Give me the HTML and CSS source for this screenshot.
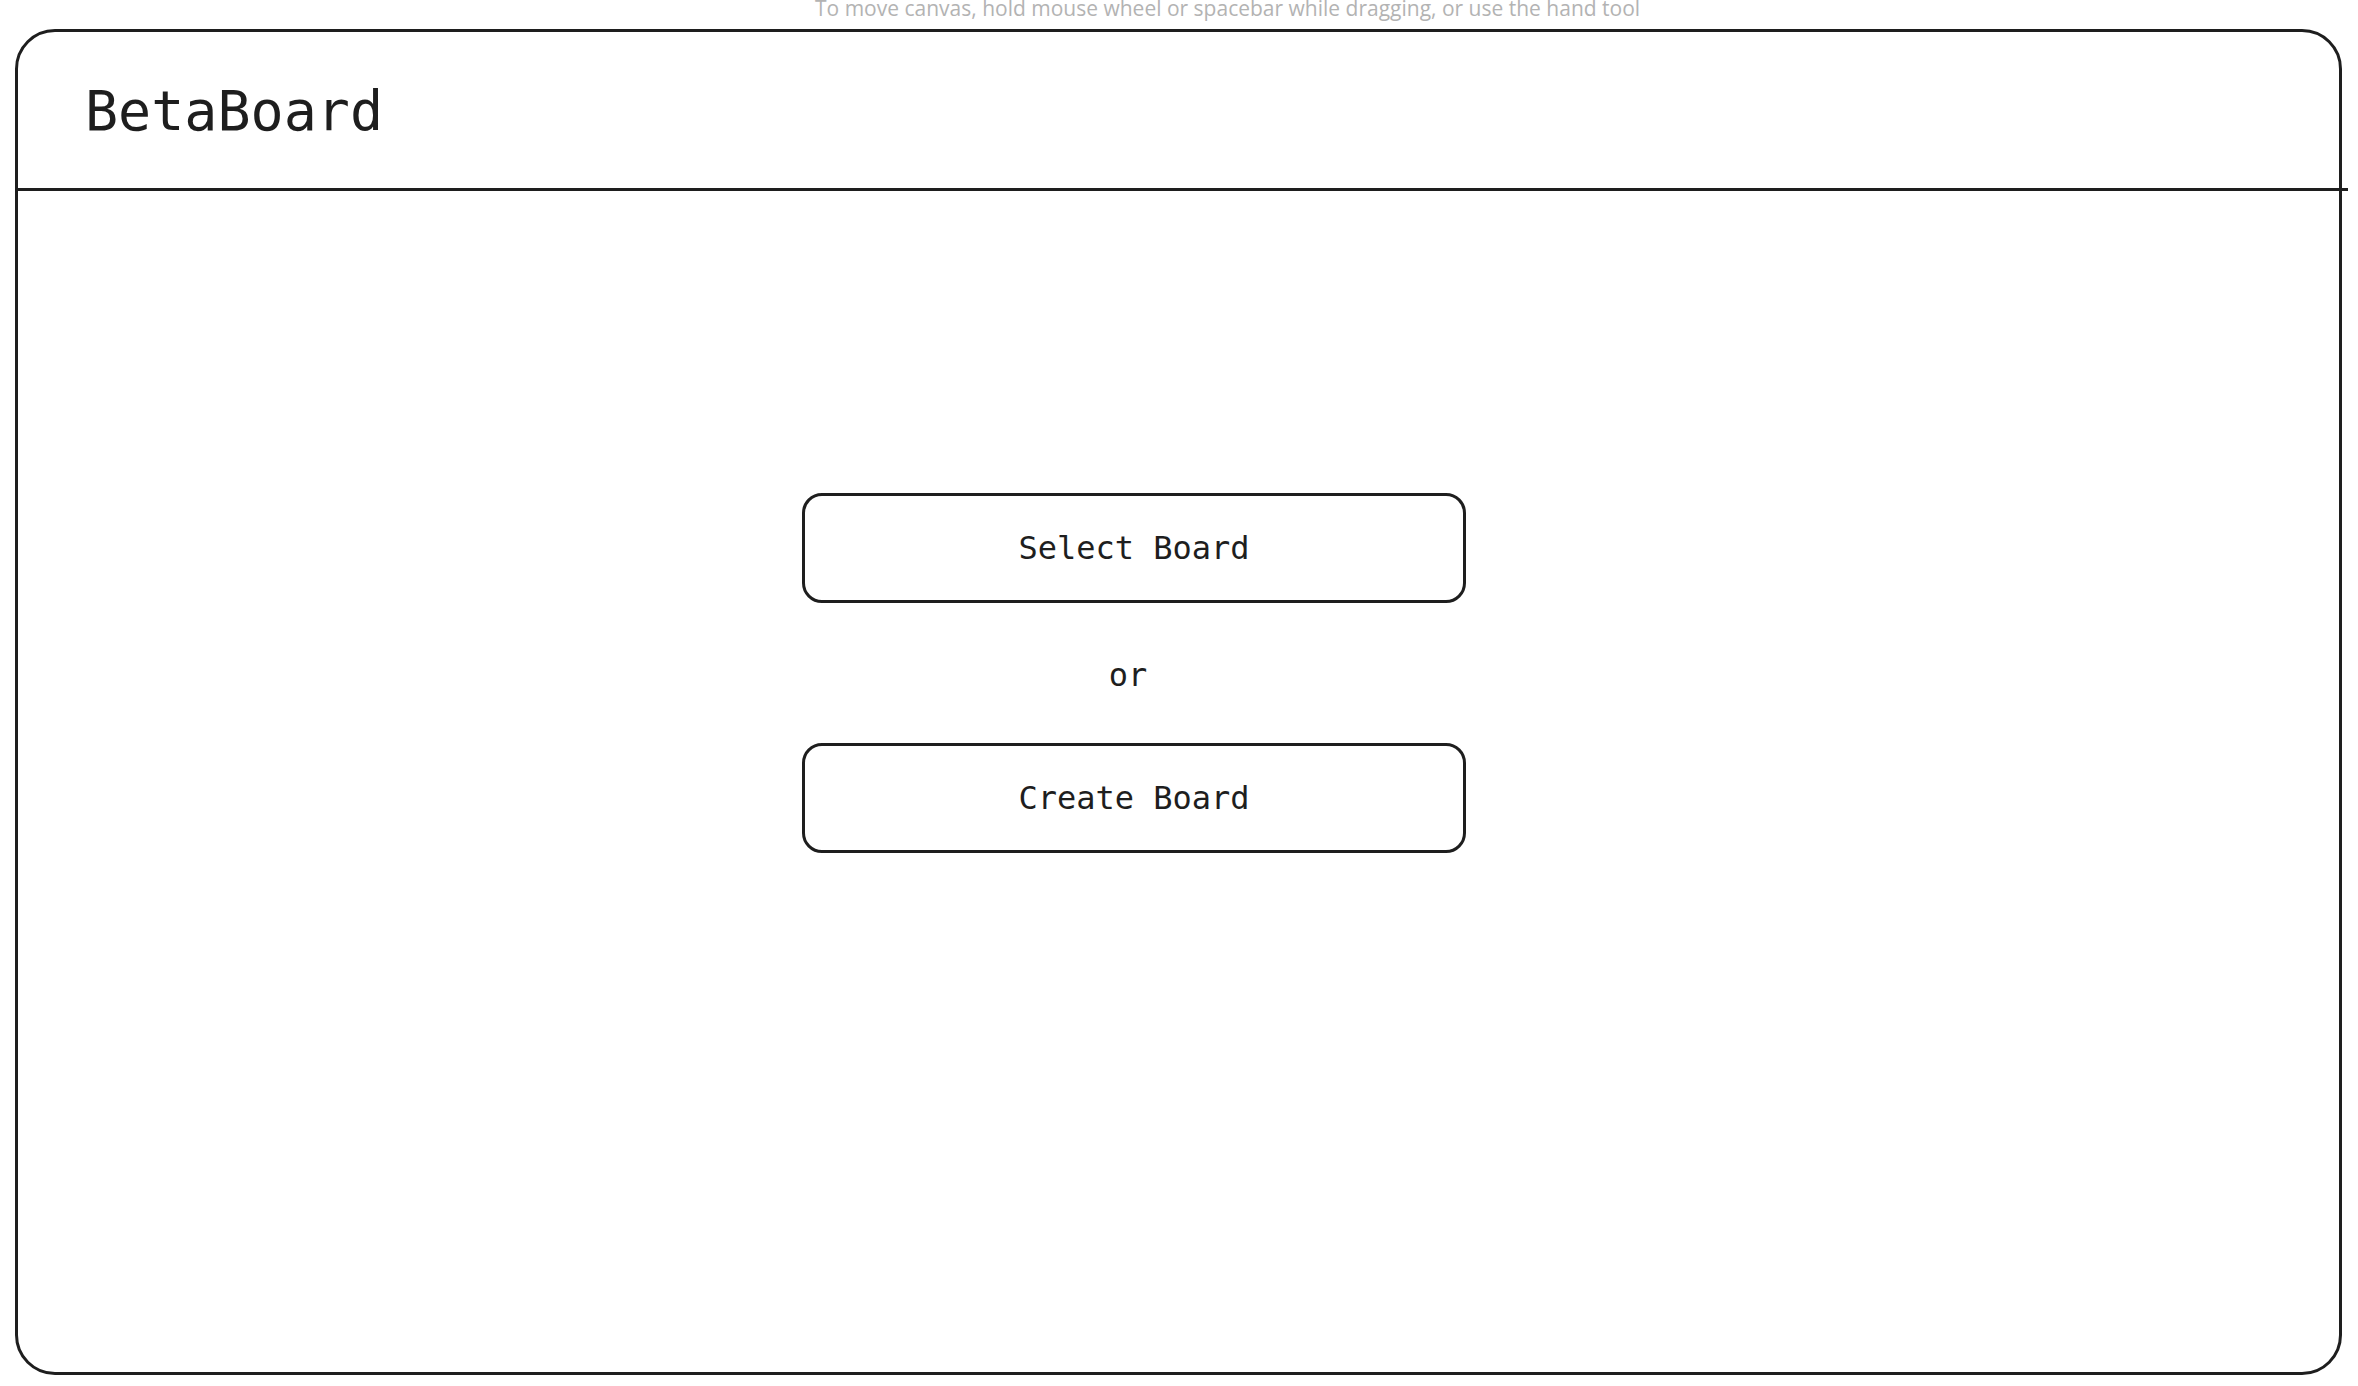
FILE: index.html
```html
<!DOCTYPE html>
<html lang="en">
<head>
<meta charset="utf-8">
<title>BetaBoard</title>
<link rel="stylesheet" href="styles.css">
</head>
<body>
<div class="hint">To move canvas, hold mouse wheel or spacebar while dragging, or use the hand tool</div>
<div class="frame">
  <header class="header">
    <h1 class="title">BetaBoard</h1>
  </header>
  <main class="main">
    <div class="actions">
      <button class="btn" type="button">Select Board</button>
      <div class="or">or</div>
      <button class="btn" type="button">Create Board</button>
    </div>
  </main>
</div>
</body>
</html>
```

FILE: styles.css
```css
* { box-sizing: border-box; }

html, body {
  margin: 0;
  padding: 0;
  background: #ffffff;
  width: 2358px;
  height: 1386px;
  overflow: hidden;
}

body {
  position: relative;
  padding: 29px 16px 0 15px;
  font-family: "DejaVu Sans Mono", "Liberation Mono", monospace;
  color: #1e1e1e;
}

.hint {
  position: absolute;
  top: -5px;
  left: 815px;
  font-family: "Open Sans", "Noto Sans", sans-serif;
  font-size: 21px;
  line-height: 26px;
  color: #b3b3b3;
  white-space: nowrap;
  z-index: 2;
}

.frame {
  width: 2327px;
  height: 1346px;
  border: 3px solid #1e1e1e;
  border-radius: 40px;
  display: flex;
  flex-direction: column;
}

.header {
  height: 159px;
  border-bottom: 3px solid #1e1e1e;
  margin-right: -9px;
  padding: 46px 0 0 67px;
}

.title {
  margin: 0;
  font-family: "DejaVu Sans Mono", "Liberation Mono", monospace;
  font-weight: normal;
  font-size: 55px;
  line-height: 66px;
  color: #1e1e1e;
}

.main {
  flex: 1;
  padding: 302px 0 0 784px;
}

.actions {
  width: 664px;
  display: flex;
  flex-direction: column;
  align-items: center;
}

.btn {
  width: 664px;
  height: 110px;
  border: 3px solid #1e1e1e;
  border-radius: 20px;
  background: #ffffff;
  font-family: "DejaVu Sans Mono", "Liberation Mono", monospace;
  font-size: 32px;
  color: #1e1e1e;
  padding: 0;
  cursor: pointer;
}

.or {
  font-size: 32px;
  line-height: 37px;
  margin: 54px 12px 49px 0;
}
```
